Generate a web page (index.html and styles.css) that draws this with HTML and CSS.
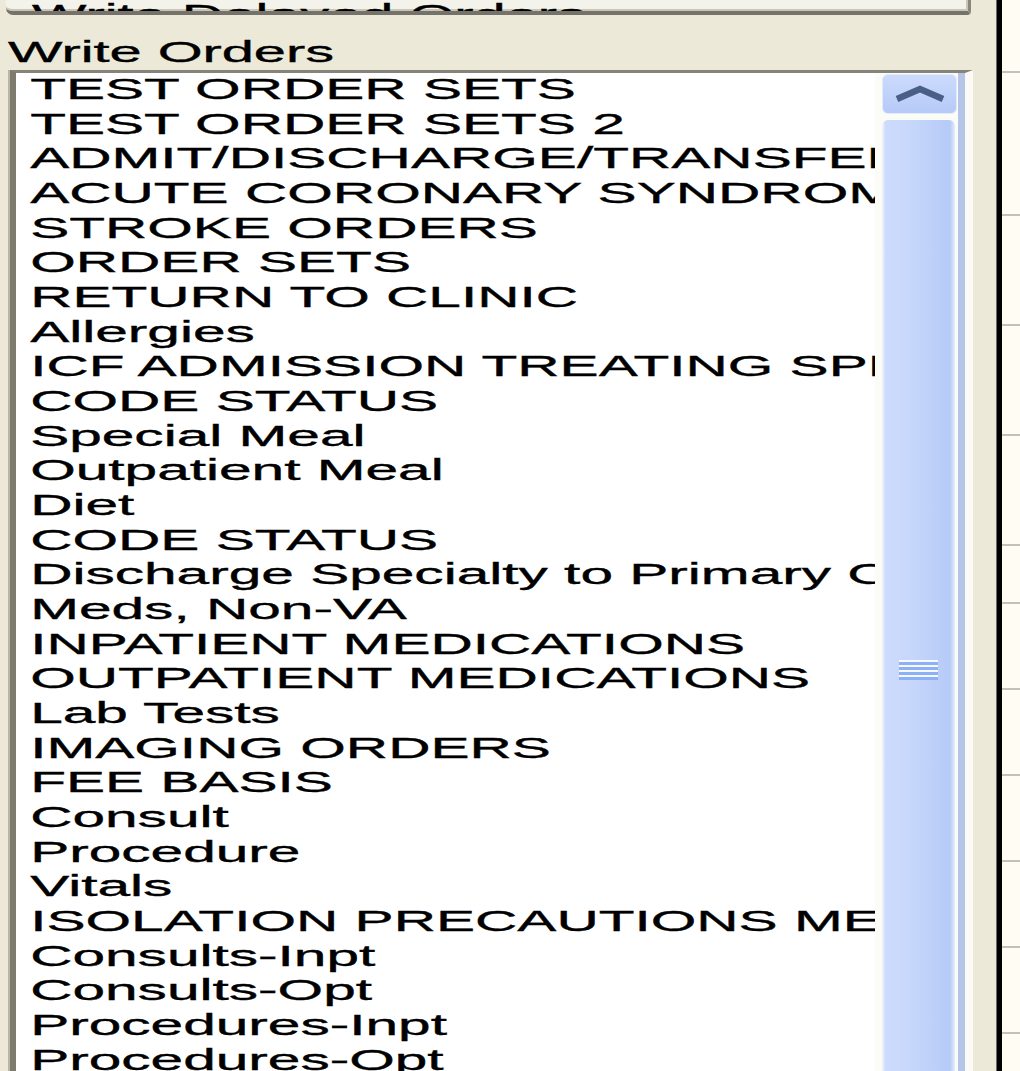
FILE: index.html
```html
<!DOCTYPE html>
<html>
<head>
<meta charset="utf-8">
<link rel="stylesheet" href="styles.css">
</head>
<body>
<div class="main">
  <div class="btn"><span class="btn-text scale">Write Delayed Orders</span></div>
  <div class="label"><span class="scale">Write Orders</span></div>
  <div class="listbox">
    <div class="items">
      <div class="items-inner">
        <div class="item">TEST ORDER SETS</div>
        <div class="item">TEST ORDER SETS 2</div>
        <div class="item">ADMIT/DISCHARGE/TRANSFER</div>
        <div class="item">ACUTE CORONARY SYNDROME</div>
        <div class="item">STROKE ORDERS</div>
        <div class="item">ORDER SETS</div>
        <div class="item">RETURN TO CLINIC</div>
        <div class="item">Allergies</div>
        <div class="item">ICF ADMISSION TREATING SPECIALTY</div>
        <div class="item">CODE STATUS</div>
        <div class="item">Special Meal</div>
        <div class="item">Outpatient Meal</div>
        <div class="item">Diet</div>
        <div class="item">CODE STATUS</div>
        <div class="item">Discharge Specialty to Primary Care</div>
        <div class="item">Meds, Non-VA</div>
        <div class="item">INPATIENT MEDICATIONS</div>
        <div class="item">OUTPATIENT MEDICATIONS</div>
        <div class="item">Lab Tests</div>
        <div class="item">IMAGING ORDERS</div>
        <div class="item">FEE BASIS</div>
        <div class="item">Consult</div>
        <div class="item">Procedure</div>
        <div class="item">Vitals</div>
        <div class="item">ISOLATION PRECAUTIONS MEASURES</div>
        <div class="item">Consults-Inpt</div>
        <div class="item">Consults-Opt</div>
        <div class="item">Procedures-Inpt</div>
        <div class="item">Procedures-Opt</div>
      </div>
    </div>
    <div class="scrollbar">
      <div class="sb-up">
        <svg width="52" height="18" viewBox="0 0 52 18"><polyline points="3,14 26,4 49,14" fill="none" stroke="#4A5F86" stroke-width="6.5" stroke-linejoin="miter"/></svg>
      </div>
      <div class="sb-thumb">
        <div class="sb-grip"></div>
      </div>
    </div>
  </div>
</div>
<div class="divider"></div>
<div class="right">
  <div class="cell c1"></div>
  <div class="cell c2"></div>
  <div class="cell c3"></div>
  <div class="cell c4"></div>
  <div class="cell c5"></div>
  <div class="cell c6"></div>
  <div class="cell c7"></div>
  <div class="cell c7"></div>
  <div class="cell c7"></div>
  <div class="cell c7"></div>
  <div class="cell c7"></div>
</div>
</body>
</html>
```

FILE: styles.css
```css
html, body {
  margin: 0;
  padding: 0;
}
body {
  width: 1020px;
  height: 1071px;
  overflow: hidden;
  background: #ECE9D8;
  font-family: "Liberation Sans", Arial, sans-serif;
  font-size: 29px;
  color: #000;
  display: flex;
  -webkit-text-stroke: 0.35px #000;
}
.main {
  width: 997px;
  flex: none;
  display: flex;
  flex-direction: column;
  min-height: 0;
}
.scale {
  display: inline-block;
  transform: scaleX(1.99);
  transform-origin: 0 0;
  white-space: nowrap;
}
.btn {
  margin-left: 6px;
  width: 962px;
  height: 11px;
  flex: none;
  background: #F3F2EB;
  border-right: 3px solid #8A877A;
  border-bottom: 4px solid #74726A;
  border-bottom-left-radius: 7px;
  border-bottom-right-radius: 4px;
  box-shadow: inset 0 -2px 0 #C9C6B6, inset -2px 0 0 #C9C6B6;
  overflow: hidden;
  line-height: 30px;
}
.btn-text {
  margin-top: -20px;
  margin-left: 26px;
}
.label {
  margin: 22px 0 0 8px;
  height: 30px;
  line-height: 30px;
  flex: none;
}
.listbox {
  margin: 3px 0 0 10px;
  width: 963px;
  box-sizing: border-box;
  flex: 1;
  min-height: 0;
  display: flex;
  background: #fff;
  border-top: 3px solid #85837A;
  border-left: 6px solid #7D7A6E;
  border-right: 8px solid #FBFAF4;
  box-shadow: -2px 0 0 #B9B6A7;
}
.items {
  width: 859px;
  flex: none;
  overflow: hidden;
}
.items-inner {
  margin-top: -1px;
  padding-left: 7px;
  transform: scaleX(2.02);
  transform-origin: 0 0;
  white-space: nowrap;
}
.item {
  line-height: 34.68px;
  height: 34.68px;
}
.scrollbar {
  width: 90px;
  flex: none;
  box-sizing: border-box;
  padding-left: 7px;
  border-right: 7px solid #B4C5E8;
  background: #FCFCF7;
  display: flex;
  flex-direction: column;
}
.sb-up {
  width: 75px;
  height: 40px;
  margin-top: 1px;
  box-sizing: border-box;
  border: 1px solid #E2EAFD;
  border-radius: 6px;
  background: linear-gradient(#CCDAFC, #B6CAF8);
  display: flex;
  align-items: center;
  justify-content: center;
  flex: none;
}
.sb-thumb {
  width: 73px;
  height: 1100px;
  margin-top: 6px;
  flex: none;
  border-radius: 6px 6px 0 0;
  background: linear-gradient(to right, #F2F6FE 0, #CCDAFC 5%, #C7D7FB 40%, #B6CAF8 93%, #E4ECFD 100%);
  display: flex;
  justify-content: center;
}
.sb-grip {
  width: 39px;
  height: 20px;
  margin-top: 540px;
  background: repeating-linear-gradient(#F7F9FF 0 2px, #8DB1F6 2px 5px);
}
.divider {
  width: 5px;
  flex: none;
  background: #000;
  box-shadow: -1px 0 0 #6A6A66, 1px 0 0 #7A7A76;
}
.right {
  flex: 1;
  background: #FFFDF3;
  display: flex;
  flex-direction: column;
}
.cell {
  flex: none;
  box-sizing: border-box;
  border-bottom: 2px solid #C2C1BA;
}
.c1 { height: 73px; }
.c2 { height: 143px; }
.c3 { height: 110px; }
.c4 { height: 110px; }
.c5 { height: 110px; }
.c6 { height: 58px; }
.c7 { height: 86px; }
```
